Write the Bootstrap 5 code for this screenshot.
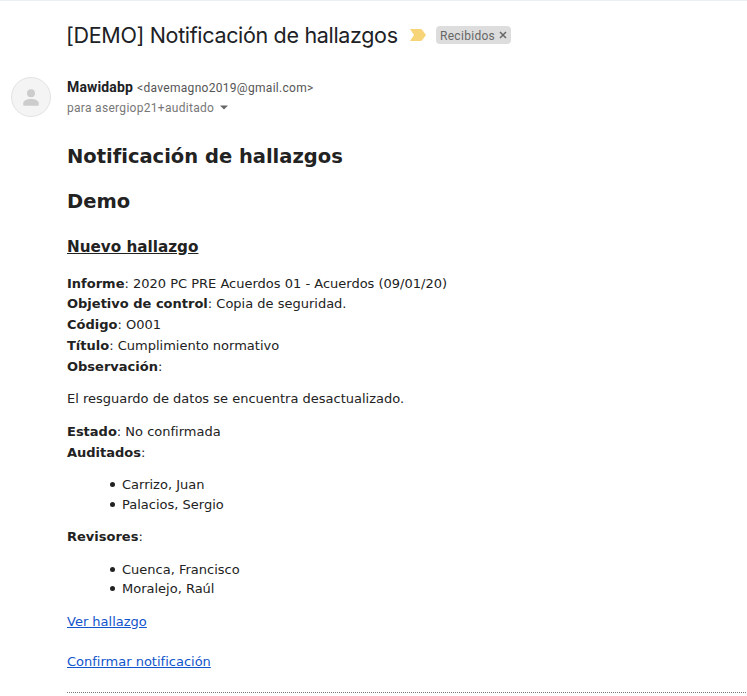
<!DOCTYPE html>
<html lang="es">
<head>
<meta charset="utf-8">
<title>Notificación de hallazgos</title>
<link href="https://cdn.jsdelivr.net/npm/bootstrap@5.3.0/dist/css/bootstrap.min.css" rel="stylesheet">
<style>
body{font-family:Roboto,sans-serif;color:#222;overflow:hidden}
.mail{border-top:1px solid #eceff1;padding-left:67px;height:696px}
.subject{font-family:Inter,sans-serif;font-size:21.5px;line-height:28px;letter-spacing:-.33px;font-weight:400;color:#202124;margin:0 0 0 -1px;width:332px;white-space:nowrap}
.head-row{padding-top:20px;height:76px}
.marker{margin:8px 10px 0 12px}
.chip{background:#ddd;color:#666;font-size:12px;line-height:20px;height:18px;border-radius:4px;padding:0 4px;letter-spacing:.3px;width:75px;margin-top:5px}
.avatar{width:40px;height:40px;margin-left:-56px;margin-right:16px}
.sender{height:68px;line-height:20px;white-space:nowrap}
.sender strong{font-size:14px;letter-spacing:.15px;color:#202124}
.meta{font-size:12px;letter-spacing:.3px;color:#555}
.meta-to{color:#777}
.caret{margin-left:5px}
.message{font-family:"DejaVu Sans",sans-serif;font-size:13px;line-height:19.5px}
.message h1,.message h2{font-size:19.5px;font-weight:700;line-height:24px;margin:0 0 21px}
.message h2{margin-bottom:23px}
.message h3{font-size:15.21px;font-weight:700;line-height:20px;margin:0 0 16.7px;text-decoration:underline}
.message p{margin:0 0 13px}
.info{margin-bottom:13px}
.info div+div{margin-top:1.3px}
.message ul{padding-left:43px;margin:0 0 13px;list-style:none}
.message li{display:flex;align-items:center}
.message li::before{content:"";width:5px;height:5px;border-radius:50%;background:#222;margin-right:7px}
.message li{padding-left:.4px}
.message li::before{margin-right:6.6px}
.message a{color:#15c}
.confirm{margin-top:20.5px}
.rule{border-top:1px dotted #777;margin-right:1px;margin-top:21px}
</style>
</head>
<body>
<main class="mail">
<header class="head-row d-flex align-items-start">
<h1 class="subject">[DEMO] Notificación de hallazgos</h1>
<svg class="marker" width="16" height="12" viewBox="0 0 16 12"><path d="M0 0h10.5q1 0 1.6.8L16 6l-3.9 5.2q-.6.8-1.6.8H0l4-6z" fill="#f7d477"/></svg>
<span class="chip d-flex justify-content-between">Recibidos
<svg width="8" height="18" viewBox="0 0 8 18"><path d="M1 6l6 6M7 6l-6 6" stroke="#666" stroke-width="1.5"/></svg></span>
</header>
<section class="sender d-flex">
<svg class="avatar" viewBox="0 0 40 40"><circle cx="20" cy="20" r="19.5" fill="#f4f4f4" stroke="#e2e2e2"/><circle cx="20" cy="16.2" r="4" fill="#ccc"/><path d="M12.3 28.8V26c0-2.500 4-4 7.700-4s7.700 1.500 7.700 4v2.800z" fill="#ccc"/></svg>
<div>
<div><strong>Mawidabp</strong> <span class="meta">&lt;davemagno2019@gmail.com&gt;</span></div>
<div class="meta meta-to d-flex align-items-center">para asergiop21+auditado
<svg class="caret" width="10" height="6" viewBox="0 0 10 6"><path d="M1 .5h8L5 4.500z" fill="#666"/></svg></div>
</div>
</section>
<section class="message">
<h1>Notificación de hallazgos</h1>
<h2>Demo</h2>
<h3>Nuevo hallazgo</h3>
<div class="info">
<div><strong>Informe</strong>: 2020 PC PRE Acuerdos 01 - Acuerdos (09/01/20)</div>
<div><strong>Objetivo de control</strong>: Copia de seguridad.</div>
<div><strong>Código</strong>: O001</div>
<div><strong>Título</strong>: Cumplimiento normativo</div>
<div><strong>Observación</strong>:</div>
</div>
<p>El resguardo de datos se encuentra desactualizado.</p>
<div class="info">
<div><strong>Estado</strong>: No confirmada</div>
<div><strong>Auditados</strong>:</div>
</div>
<ul><li>Carrizo, Juan</li><li>Palacios, Sergio</li></ul>
<p><strong>Revisores</strong>:</p>
<ul><li>Cuenca, Francisco</li><li>Moralejo, Raúl</li></ul>
<div><a href="#">Ver hallazgo</a></div>
<div class="confirm"><a href="#">Confirmar notificación</a></div>
<div class="rule"></div>
</section>
</main>
<script src="https://cdn.jsdelivr.net/npm/bootstrap@5.3.0/dist/js/bootstrap.bundle.min.js"></script>
</body>
</html>
